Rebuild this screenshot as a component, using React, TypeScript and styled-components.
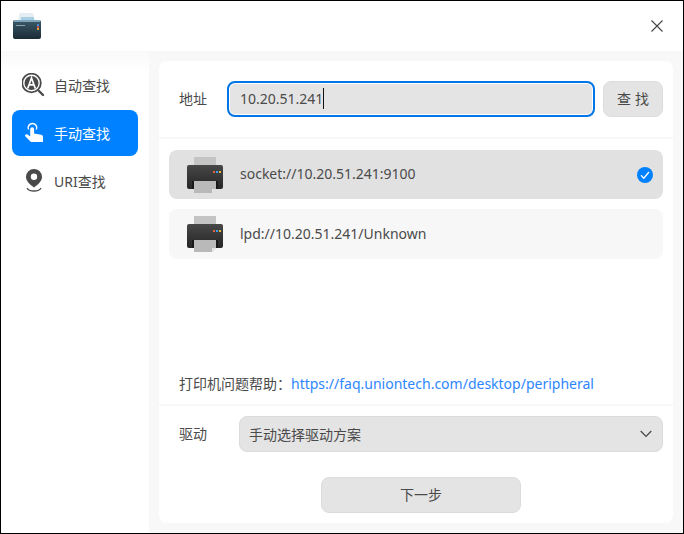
import React from "react";
import styled, { createGlobalStyle } from "styled-components";

const GlobalStyle = createGlobalStyle`
  html, body {
    margin: 0;
    background: #000;
  }
  * {
    box-sizing: border-box;
  }
`;

const Window = styled.div`
  width: 684px;
  height: 534px;
  border: 1px solid #000;
  background: #f8f8f8;
  display: flex;
  flex-direction: column;
  overflow: hidden;
  font-family: "Noto Sans", "Noto Sans CJK SC", sans-serif;
  font-size: 14px;
  color: #4a4a4a;
`;

const TitleBar = styled.header`
  height: 50px;
  flex: none;
  background: #fff;
  display: flex;
  align-items: center;
  justify-content: space-between;
  padding: 0 20px 0 12px;
`;

const Body = styled.div`
  flex: 1;
  display: flex;
  min-height: 0;
`;

const Sidebar = styled.nav`
  width: 148px;
  flex: none;
  background: linear-gradient(#f9f9f9, #fff 20px);
  padding: 11px 11px 0;
  display: flex;
  flex-direction: column;
  gap: 2px;
`;

const NavItem = styled.div<{ $active?: boolean }>`
  height: 46px;
  border-radius: 8px;
  display: flex;
  align-items: center;
  gap: 8px;
  padding-left: 10px;
  background: ${({ $active }) => ($active ? "#0081ff" : "transparent")};
  color: ${({ $active }) => ($active ? "#fff" : "#4a4a4a")};
`;

const Main = styled.main`
  flex: 1;
  padding: 10px;
  display: flex;
  min-width: 0;
`;

const Panel = styled.section`
  flex: 1;
  background: #fff;
  border-radius: 8px;
  display: flex;
  flex-direction: column;
  min-width: 0;
`;

const AddressRow = styled.div`
  height: 78px;
  flex: none;
  display: flex;
  align-items: center;
  padding: 0 10px 0 20px;
  border-bottom: 2px solid #f7f7f7;
`;

const FieldLabel = styled.span`
  flex: none;
  width: 48px;
  padding-bottom: 2px;
`;

const Input = styled.div`
  flex: 1;
  height: 36px;
  border: 2px solid #0075e6;
  border-radius: 8px;
  background: #e4e4e4;
  box-shadow: inset 0 0 0 1px #fff;
  display: flex;
  align-items: center;
  padding: 0 0 2px 11px;
`;

const Caret = styled.span`
  width: 1px;
  height: 21px;
  background: #111;
`;

const GreyButton = styled.button`
  height: 36px;
  border: 1px solid #dcdcdc;
  border-radius: 8px;
  background: #e4e4e4;
  color: #4a4a4a;
  font: inherit;
  padding: 0 0 2px;
`;

const SearchButton = styled(GreyButton)`
  width: 60px;
  margin-left: 8px;
  letter-spacing: 4px;
  padding-left: 4px;
`;

const DeviceList = styled.div`
  flex: 1;
  padding: 11px 10px 0;
  display: flex;
  flex-direction: column;
  gap: 10px;
`;

const Device = styled.div<{ $selected?: boolean; $height: number }>`
  height: ${({ $height }) => $height}px;
  border-radius: 8px;
  background: ${({ $selected }) => ($selected ? "#e1e1e1" : "#f7f7f7")};
  display: flex;
  align-items: center;
  padding: 0 10px 0 18px;
  gap: 17px;
`;

const DeviceName = styled.span`
  flex: 1;
  padding-bottom: 2px;
`;

const HelpLine = styled.div`
  flex: none;
  height: 20px;
  padding-left: 20px;
  margin-bottom: 11px;
  white-space: nowrap;
`;

const HelpLink = styled.a`
  color: #2e86ff;
  text-decoration: none;
`;

const DriverRow = styled.div`
  flex: none;
  height: 48px;
  border-top: 2px solid #f7f7f7;
  padding: 10px 10px 0 20px;
  display: flex;
`;

const DriverLabel = styled.span`
  width: 60px;
  flex: none;
  line-height: 36px;
`;

const Select = styled.div`
  flex: 1;
  height: 36px;
  border: 1px solid #dcdcdc;
  border-radius: 8px;
  background: #e4e4e4;
  display: flex;
  align-items: center;
  justify-content: space-between;
  padding: 0 10px 0 9px;
`;

const Footer = styled.div`
  flex: none;
  display: flex;
  justify-content: center;
  padding: 25px 0 10px 10px;
`;

const NextButton = styled(GreyButton)`
  width: 200px;
`;

const AppLogo = () => (
  <svg width="28" height="26" viewBox="0 0 28 26">
    <defs>
      <linearGradient id="logoBody" x1="0" y1="0" x2="0" y2="1">
        <stop offset="0" stopColor="#3d5b6b" />
        <stop offset="1" stopColor="#1b2b35" />
      </linearGradient>
    </defs>
    <path d="M6 2l1-2h13l2 8H5z" fill="#e3edf2" />
    <rect x="8" y="4" width="13" height="4" fill="#a9cfe4" />
    <rect x="0" y="7" width="28" height="19" rx="2" fill="url(#logoBody)" />
    <rect x="1" y="7" width="26" height="2" fill="#7fa6bb" />
    <rect x="24" y="11" width="2" height="2" fill="#3f8fd0" />
    <rect x="24" y="13" width="2" height="2" fill="#c34c4c" />
    <rect x="24" y="15" width="2" height="2" fill="#d8a13a" />
    <rect x="3" y="12" width="9" height="1" fill="#8ba2ae" />
  </svg>
);

const CloseIcon = () => (
  <svg width="12" height="12" viewBox="0 0 12 12">
    <path d="M.5.5l11 11M11.5.5l-11 11" stroke="#444" strokeWidth="1.1" fill="none" />
  </svg>
);

const AutoIcon = () => (
  <svg width="24" height="24" viewBox="0 0 24 24" fill="none">
    <circle cx="9.500" cy="10" r="9.300" stroke="#4a4a4a" strokeWidth="1.800" />
    <circle cx="9.500" cy="10" r="7" fill="#4a4a4a" />
    <path d="M5.700 15.500l3.800-10.500 3.800 10.500M7.100 11.800h4.800" stroke="#fff" strokeWidth="1.700" />
    <path d="M17 18l4 4" stroke="#4a4a4a" strokeWidth="2.400" strokeLinecap="round" />
  </svg>
);

const HandIcon = () => (
  <svg width="24" height="24" viewBox="0 0 24 24" fill="#fff">
    <path d="M8.200 8.200a1.950 1.950 0 0 1 3.900 0v4.300l7 1.300c1.200.2 1.900 1 1.900 2.200V21H9L3.500 15.500c-1.200-1.300.5-2.900 2-1.900l2.700 1.900z" />
    <path d="M5.800 8.500a5 5 0 1 1 9.300 0h-1.500a3.600 3.600 0 1 0-6.300 0z" />
  </svg>
);

const PinIcon = () => (
  <svg width="24" height="24" viewBox="0 0 24 24">
    <path
      fillRule="evenodd"
      d="M12 0a8 8 0 0 1 8 8c0 4-4 7.500-8 10.500-4-3-8-6.500-8-10.500a8 8 0 0 1 8-8zm0 4.500a3.200 3.200 0 1 0 0 6.400 3.200 3.200 0 0 0 0-6.400z"
      fill="#4a4a4a"
    />
    <path d="M5 19c1 2 4 3 7 3s6-1 7-3" stroke="#4a4a4a" strokeWidth="1.300" fill="none" />
  </svg>
);

const PrinterIcon = () => (
  <svg width="36" height="36" viewBox="0 0 36 36">
    <defs>
      <linearGradient id="printerBody" x1="0" y1="0" x2="0" y2="1">
        <stop offset="0" stopColor="#484848" />
        <stop offset="1" stopColor="#252525" />
      </linearGradient>
    </defs>
    <rect x="7" y="0" width="22" height="9" fill="#c4c4c4" />
    <rect x="0" y="8" width="36" height="24" rx="2" fill="url(#printerBody)" />
    <rect x="26" y="14" width="2" height="2" fill="#e8603c" />
    <rect x="29" y="14" width="2" height="2" fill="#3aa0f0" />
    <rect x="32" y="14" width="2" height="2" fill="#e8b23c" />
    <rect x="5" y="24" width="26" height="8" fill="#181818" />
    <path d="M7 24h22v8l-4 4H7z" fill="#b9b9b9" />
    <path d="M25 36v-4h4z" fill="#e6e6e6" />
  </svg>
);

const CheckBadge = () => (
  <svg width="16" height="16" viewBox="0 0 16 16">
    <circle cx="8" cy="8" r="8" fill="#0081ff" />
    <path d="M4 8.300l2.800 2.900L12 5" stroke="#fff" strokeWidth="1.300" fill="none" />
  </svg>
);

const Chevron = () => (
  <svg width="12" height="8" viewBox="0 0 12 8">
    <path d="M.7 1l5.300 5.500L11.300 1" stroke="#444" strokeWidth="1.200" fill="none" />
  </svg>
);

export default function App() {
  return (
    <Window>
      <GlobalStyle />
      <TitleBar>
        <AppLogo />
        <CloseIcon />
      </TitleBar>
      <Body>
        <Sidebar>
          <NavItem>
            <AutoIcon />
            自动查找
          </NavItem>
          <NavItem $active>
            <HandIcon />
            手动查找
          </NavItem>
          <NavItem>
            <PinIcon />
            URI查找
          </NavItem>
        </Sidebar>
        <Main>
          <Panel>
            <AddressRow>
              <FieldLabel>地址</FieldLabel>
              <Input>
                10.20.51.241
                <Caret />
              </Input>
              <SearchButton>查找</SearchButton>
            </AddressRow>
            <DeviceList>
              <Device $selected $height={49}>
                <PrinterIcon />
                <DeviceName>socket://10.20.51.241:9100</DeviceName>
                <CheckBadge />
              </Device>
              <Device $height={50}>
                <PrinterIcon />
                <DeviceName>lpd://10.20.51.241/Unknown</DeviceName>
              </Device>
            </DeviceList>
            <HelpLine>
              打印机问题帮助：
              <HelpLink href="#">https://faq.uniontech.com/desktop/peripheral</HelpLink>
            </HelpLine>
            <DriverRow>
              <DriverLabel>驱动</DriverLabel>
              <Select>
                手动选择驱动方案
                <Chevron />
              </Select>
            </DriverRow>
            <Footer>
              <NextButton>下一步</NextButton>
            </Footer>
          </Panel>
        </Main>
      </Body>
    </Window>
  );
}
